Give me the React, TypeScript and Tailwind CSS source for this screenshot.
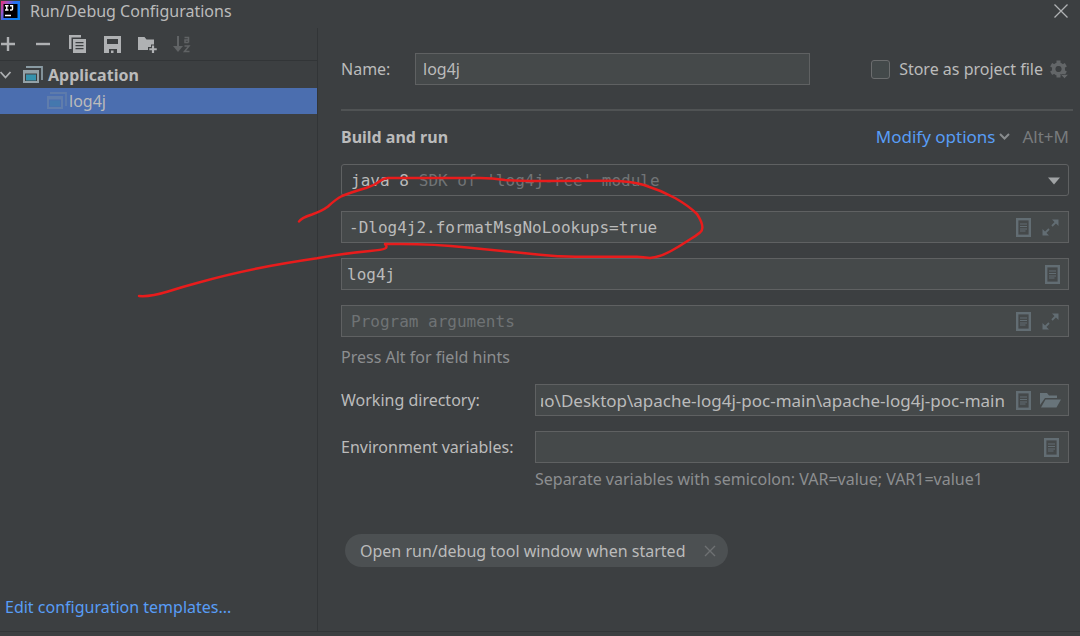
import { ReactNode } from 'react'
import clsx from 'clsx'

const icon = 'block shrink-0'

function LogoIcon() {
  return (
    <svg className={icon} width="20" height="20" viewBox="0 0 20 20">
      <defs>
        <linearGradient id="logo" x1="0" y1="0" x2="1" y2="0.6">
          <stop offset="0" stopColor="#f0306e" />
          <stop offset="0.3" stopColor="#9a55c8" />
          <stop offset="0.55" stopColor="#2a70f0" />
          <stop offset="1" stopColor="#0a84f5" />
        </linearGradient>
      </defs>
      <rect x="1" y="0" width="19" height="19" fill="url(#logo)" />
      <rect x="3.500" y="3" width="14" height="14" fill="#000" />
      <path
        d="M5 4.700h3.500M6.750 4.700v4.300M5 9h3.500M10 4.700h2.500v3.300q0 1-1 1h-1.500M5 14.500h6"
        fill="none"
        stroke="#fff"
        strokeWidth="1.400"
      />
    </svg>
  )
}

function AppIcon({ muted }: { muted?: boolean }) {
  return (
    <svg className={clsx(icon, muted && 'opacity-30')} width="20" height="18" viewBox="0 0 20 18">
      <path d="M3 1h16v13" fill="none" stroke="#8a9ba3" strokeWidth="1.800" />
      <path d="M0 4h16v13H0zM2 7.500v7.500h12V7.500z" fill="#93a1a7" fillRule="evenodd" />
      <rect x="3" y="8.500" width="10" height="6" fill="#3592ad" />
    </svg>
  )
}

function ListIcon() {
  return (
    <svg className={icon} width="15" height="19" viewBox="0 0 15 19">
      <rect x="1.200" y="1.200" width="12.600" height="16.600" fill="none" stroke="#626d73" strokeWidth="2.400" />
      <path d="M4 6h7M4 8.500h7M4 11h7M4 13h5.500" stroke="#626d73" strokeWidth="1.100" />
    </svg>
  )
}

function ExpandIcon() {
  return (
    <svg className={icon} width="17" height="17" viewBox="0 0 17 17">
      <path d="M10 7l4-4M7 10l-4 4" stroke="#626d73" strokeWidth="1.800" />
      <path d="M10 0.500h6.500v6.500zM0.500 10v6.500h6.500z" fill="#626d73" />
    </svg>
  )
}

function FolderIcon() {
  return (
    <svg className={icon} width="21" height="16" viewBox="0 0 21 16">
      <path d="M0 13V1h7l2 2.500h8V6H5zM5.500 7.500H21L16.500 15.500H1z" fill="#68747a" />
    </svg>
  )
}

function ToolButton({ label, children }: { label: string; children: ReactNode }) {
  return (
    <button type="button" aria-label={label} className="flex h-5 w-5 items-center justify-center">
      {children}
    </button>
  )
}

function Toolbar() {
  return (
    <div className="flex h-[33px] shrink-0 items-center gap-[15px] border-b border-[#323537]">
      <div className="-ml-0.5">
        <ToolButton label="Add">
          <svg width="14" height="14" viewBox="0 0 14 14">
            <path d="M7 0v14M0 7h14" stroke="#afb1b3" strokeWidth="2.400" />
          </svg>
        </ToolButton>
      </div>
      <ToolButton label="Remove">
        <svg width="14" height="14" viewBox="0 0 14 14">
          <path d="M0 7h14" stroke="#afb1b3" strokeWidth="2.400" />
        </svg>
      </ToolButton>
      <div className="-ml-px flex gap-[15px]">
        <ToolButton label="Copy">
          <svg width="17" height="18" viewBox="0 0 17 18">
            <path d="M0 0h12v2.500H2.500V14H0z" fill="#afb1b3" />
            <path d="M4 4h13v14H4zM6.500 7v1.200h8V7zM6.500 10v1.200h8V10zM6.500 13v1.200h8V13z" fill="#afb1b3" fillRule="evenodd" />
          </svg>
        </ToolButton>
        <ToolButton label="Save">
          <svg width="17" height="17" viewBox="0 0 17 17">
            <path d="M0 0h17v17h-4v-4H5v4H0zM3 3v5h11V3z" fill="#afb1b3" fillRule="evenodd" />
            <path d="M7 14.500h2.500V17H7z" fill="#afb1b3" />
          </svg>
        </ToolButton>
        <ToolButton label="New folder">
          <svg width="19" height="17" viewBox="0 0 19 17">
            <path d="M0 1h6.500l2 2.500H16V8.500h-3V11h-3v3H0z" fill="#afb1b3" />
            <path d="M15 9.500v7.500M11.250 13.250h7.500" stroke="#afb1b3" strokeWidth="2.200" />
          </svg>
        </ToolButton>
        <ToolButton label="Sort">
          <svg width="18" height="18" viewBox="0 0 18 18" fill="none" stroke="#606365">
            <path d="M5 1v12" strokeWidth="2" />
            <path d="M0 11h10l-5 6z" fill="#606365" stroke="none" />
            <path d="M11.500 2.500h4v5M15.500 5h-3.500v2.500h3.500M11.500 11h4.500l-4.500 5.500h5" strokeWidth="1.500" />
          </svg>
        </ToolButton>
      </div>
    </div>
  )
}

function Sidebar() {
  return (
    <aside className="flex w-[318px] shrink-0 flex-col border-r border-[#323537]">
      <Toolbar />
      <ul className="flex-1">
        <li className="flex h-[27px] items-center">
          <svg className={icon} width="12" height="8" viewBox="0 0 12 8">
            <path d="M0.500 1l5 5.500 5-5.500" fill="none" stroke="#adb0b2" strokeWidth="1.800" />
          </svg>
          <span className="ml-[11px]">
            <AppIcon />
          </span>
          <span className="ml-[5px] font-bold">Application</span>
        </li>
        <li className="flex h-[26px] items-center bg-[#4b6eaf] pl-[47px]">
          <AppIcon muted />
          <span className="ml-[2px]">log4j</span>
        </li>
      </ul>
      <a href="#templates" className="mb-3 ml-[5px] self-start text-[#589df6]">
        Edit configuration templates...
      </a>
    </aside>
  )
}

type FieldProps = {
  id: string
  label?: string
  value?: string
  placeholder?: string
  mono?: boolean
  rtl?: boolean
  className?: string
  children?: ReactNode
}

function Field({ id, label, value, placeholder, mono, rtl, className, children }: FieldProps) {
  return (
    <div className={clsx('flex h-8 items-center border border-[#5f6162] bg-[#45494a]', className)}>
      <input
        id={id}
        type="text"
        aria-label={label}
        defaultValue={value}
        placeholder={placeholder}
        dir={rtl ? 'rtl' : undefined}
        className={clsx(
          'h-full min-w-0 flex-1 bg-transparent outline-none placeholder:text-[#6f7375]',
          mono && 'font-["DejaVu_Sans_Mono",monospace]',
          rtl && 'text-[17px]'
        )}
      />
      {children}
    </div>
  )
}

function IconButton({ label, children }: { label: string; children: ReactNode }) {
  return (
    <button type="button" aria-label={label}>
      {children}
    </button>
  )
}

function FieldIcons({ tight, children }: { tight?: boolean; children?: ReactNode }) {
  return (
    <div className={clsx('flex items-center', tight ? 'gap-[9px]' : 'gap-[11px]')}>
      <IconButton label="Insert macro">
        <ListIcon />
      </IconButton>
      {children}
    </div>
  )
}

function ExpandButton() {
  return (
    <IconButton label="Expand">
      <ExpandIcon />
    </IconButton>
  )
}

function NameRow() {
  return (
    <div className="mr-[11px] flex items-center">
      <label htmlFor="name" className="w-[74px] shrink-0">
        Name:
      </label>
      <Field id="name" value="log4j" className="max-w-[395px] flex-1 pl-[7px]" />
      <div className="ml-auto flex items-center">
        <input
          id="store"
          type="checkbox"
          className="h-[19px] w-[19px] appearance-none rounded-[3px] border border-[#6b6d6e] bg-[#43494a]"
        />
        <label htmlFor="store" className="ml-[9px]">
          Store as project file
        </label>
        <button type="button" aria-label="Storage options" className="ml-[7px]">
          <svg className={icon} width="19" height="19" viewBox="0 0 19 19">
            <circle cx="8.500" cy="9" r="4.800" fill="none" stroke="#636668" strokeWidth="3.600" />
            <path
              d="M8.500 0.500v4M8.500 13.500v4M1.140 4.750l3.460 2M12.400 11.250l3.460 2M1.140 13.250l3.460-2M12.400 6.750l3.460-2"
              stroke="#636668"
              strokeWidth="4"
            />
            <circle cx="8.500" cy="9" r="2.700" fill="#3c3f41" />
            <path d="M10.500 14.500h8l-4 4z" fill="#636668" stroke="#3c3f41" strokeWidth="0.600" />
          </svg>
        </button>
      </div>
    </div>
  )
}

function JdkSelect() {
  return (
    <div className="relative flex h-8 items-center rounded-[3px] border border-[#5f6162] pt-0.5 pr-2 pl-[9px] font-['DejaVu_Sans_Mono',monospace]">
      <span>java 8</span>
      <span className="ml-2.5 text-[#717476]">SDK of 'log4j-rce' module</span>
      <svg className="ml-auto" width="12" height="8" viewBox="0 0 12 8">
        <path d="M0 0.500h12l-6 7z" fill="#a0a3a5" />
      </svg>
      <select aria-label="JDK" className="absolute inset-0 appearance-none bg-transparent text-transparent outline-none">
        <option>java 8</option>
      </select>
    </div>
  )
}

function BuildAndRun() {
  return (
    <section className="mr-[11px]">
      <div className="mt-3 flex h-7 items-center">
        <h2 className="font-bold">Build and run</h2>
        <button type="button" className="ml-auto flex items-center text-[17px] text-[#589df6]">
          Modify options
          <svg className="ml-1" width="11" height="8" viewBox="0 0 11 8">
            <path d="M1 1l4.500 4.500L10 1" fill="none" stroke="#898c8e" strokeWidth="2" />
          </svg>
        </button>
        <span className="ml-3 text-[17px] text-[#787b7d]">Alt+M</span>
      </div>

      <div className="mt-[13px] flex flex-col gap-[15px]">
        <JdkSelect />
        <Field id="vm" label="VM options" value="-Dlog4j2.formatMsgNoLookups=true" mono className="pr-[9px] pl-[7px]">
          <FieldIcons>
            <ExpandButton />
          </FieldIcons>
        </Field>
        <Field id="main" label="Main class" value="log4j" mono className="pr-2 pl-[5px]">
          <FieldIcons />
        </Field>
        <Field id="args" label="Program arguments" placeholder="Program arguments" mono className="pr-[9px] pl-[9px]">
          <FieldIcons>
            <ExpandButton />
          </FieldIcons>
        </Field>
      </div>
      <p className="mt-2 text-[#8c8e90]">Press Alt for field hints</p>

      <div className="mt-[15px] grid grid-cols-[194px_1fr] items-center gap-y-[15px]">
        <label htmlFor="dir">Working directory:</label>
        <Field id="dir" value="uo\Desktop\apache-log4j-poc-main\apache-log4j-poc-main" rtl className="gap-[11px] pr-[7px] pl-[5px]">
          <FieldIcons tight>
            <IconButton label="Browse">
              <FolderIcon />
            </IconButton>
          </FieldIcons>
        </Field>
        <label htmlFor="env">Environment variables:</label>
        <Field id="env" className="pr-[9px] pl-[7px]">
          <FieldIcons />
        </Field>
      </div>
      <p className="mt-1 ml-[194px] text-[#8c8e90]">Separate variables with semicolon: VAR=value; VAR1=value1</p>

      <div className="mt-[43px] ml-1 inline-flex h-[33px] items-center rounded-full bg-[#4c5052] pr-3 pl-[15px]">
        Open run/debug tool window when started
        <button type="button" aria-label="Remove option" className="ml-[18px]">
          <svg className={icon} width="12" height="12" viewBox="0 0 12 12">
            <path d="M1 1l10 10M11 1L1 11" stroke="#6e7173" strokeWidth="1.400" />
          </svg>
        </button>
      </div>
    </section>
  )
}

// Red pen stroke circling the VM options
function Annotation() {
  return (
    <svg className="pointer-events-none absolute top-0 left-0" width="720" height="310" viewBox="0 0 720 310">
      <path
        d="M299 221.500Q301 218 312 214.500Q322 211 328 206.500Q336 199 342 196Q352 192 366 188Q375 185 380 181Q384 178 388 178H480Q492 178 505 180Q515 181 540 181L613 180.700Q630 181 644 185Q660 190 675 198Q689 206 697 214Q706 228 700 232.500Q696 236 689 240Q680 246 671 251Q660 257 650 258Q643 257 637 256.700H580Q560 257 540 254.700L467 247.500Q435 244 400 244H385Q388 247 385 248.500Q382 250 370 251Q340 254 317 258.300Q285 263 257 268.500Q225 275 197 283Q182 287 168 291.500Q150 297 139 296"
        fill="none"
        stroke="#e81c1c"
        strokeWidth="2.500"
        strokeLinecap="round"
        strokeLinejoin="round"
      />
    </svg>
  )
}

export default function App() {
  return (
    <div className="relative flex min-h-screen flex-col overflow-hidden bg-[#3c3f41] font-['Noto_Sans',sans-serif] text-[16px] leading-6 text-[#bbbbbb]">
      <header className="flex h-7 shrink-0 items-center pr-3 pb-1.5">
        <LogoIcon />
        <h1 className="ml-2.5">Run/Debug Configurations</h1>
        <button type="button" aria-label="Close" className="ml-auto">
          <svg className={icon} width="14" height="14" viewBox="0 0 14 14">
            <path d="M0.500 0.500l13 13M13.500 0.500l-13 13" stroke="#b0b2b4" strokeWidth="1.300" />
          </svg>
        </button>
      </header>
      <div className="flex flex-1">
        <Sidebar />
        <main className="min-w-0 flex-1 pt-[25px] pl-[23px]">
          <NameRow />
          <hr className="mt-6 mr-[7px] border-t-2 border-[#505354]" />
          <BuildAndRun />
        </main>
      </div>
      <footer className="h-[5px] shrink-0 border-t border-[#323537]" />
      <Annotation />
    </div>
  )
}
